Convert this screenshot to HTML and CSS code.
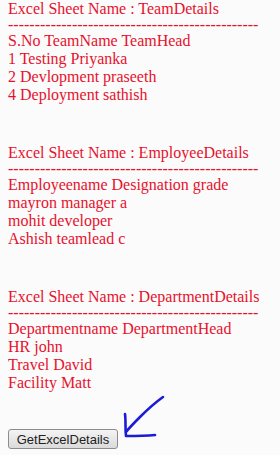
FILE: index.html
```html
<!doctype html>
<html lang="en">
  <head>
    <meta charset="UTF-8" />
    <meta name="viewport" content="width=device-width, initial-scale=1.0" />
    <title>excel details</title>
    <link rel="stylesheet" href="styles.css">
  </head>

  <body>
    <div id="result">
      <div class="sheet">
        <div class="title">Excel Sheet Name : TeamDetails</div>
        <div class="dashes">-----------------------------------------------</div>
        <div class="row">S.No TeamName TeamHead</div>
        <div class="row">1 Testing Priyanka</div>
        <div class="row">2 Devlopment praseeth</div>
        <div class="row">4 Deployment sathish</div>
      </div>
      <div class="sheet">
        <div class="title">Excel Sheet Name : EmployeeDetails</div>
        <div class="dashes">-----------------------------------------------</div>
        <div class="row">Employeename Designation grade</div>
        <div class="row">mayron manager a</div>
        <div class="row">mohit developer</div>
        <div class="row">Ashish teamlead c</div>
      </div>
      <div class="sheet">
        <div class="title">Excel Sheet Name : DepartmentDetails</div>
        <div class="dashes">-----------------------------------------------</div>
        <div class="row">Departmentname DepartmentHead</div>
        <div class="row">HR john</div>
        <div class="row">Travel David</div>
        <div class="row">Facility Matt</div>
      </div>
    </div>

    <div class="actions">
      <button type="button" id="get-details">GetExcelDetails</button>
      <svg class="arrow" width="46" height="46" viewBox="0 0 46 46">
        <path d="M41 2 C34 7 26 14 18 22 C12 28 7 33 4 37" />
        <path d="M3 19 C4 26 3 33 4 41 C12 41 22 41 33 40" />
      </svg>
    </div>
  </body>
</html>
```

FILE: styles.css
```css
body {
  margin: 0 8px;
  font-family: "Liberation Serif", "Times New Roman", serif;
  font-size: 16px;
  background-color: #fbfbfb;
}

#result {
  display: flex;
  flex-direction: column;
  gap: 40px;
  color: #e8112d;
  line-height: 18px;
}

.title {
  line-height: 18px;
}

.dashes {
  line-height: 14px;
}

.actions {
  display: flex;
  align-items: flex-start;
  gap: 4px;
  margin-top: 3px;
}

button {
  font-family: "Liberation Sans", Arial, sans-serif;
  font-size: 13px;
  width: 110px;
  height: 20px;
  padding: 0;
  margin-top: 34px;
  color: #222;
  background: linear-gradient(#f4f4f4, #dadada);
  border: 1px solid #8c8c8c;
  border-radius: 3px;
}

.arrow {
  fill: none;
  stroke: #1c1cd6;
  stroke-width: 2.6;
  stroke-linecap: round;
  stroke-linejoin: round;
}
```
